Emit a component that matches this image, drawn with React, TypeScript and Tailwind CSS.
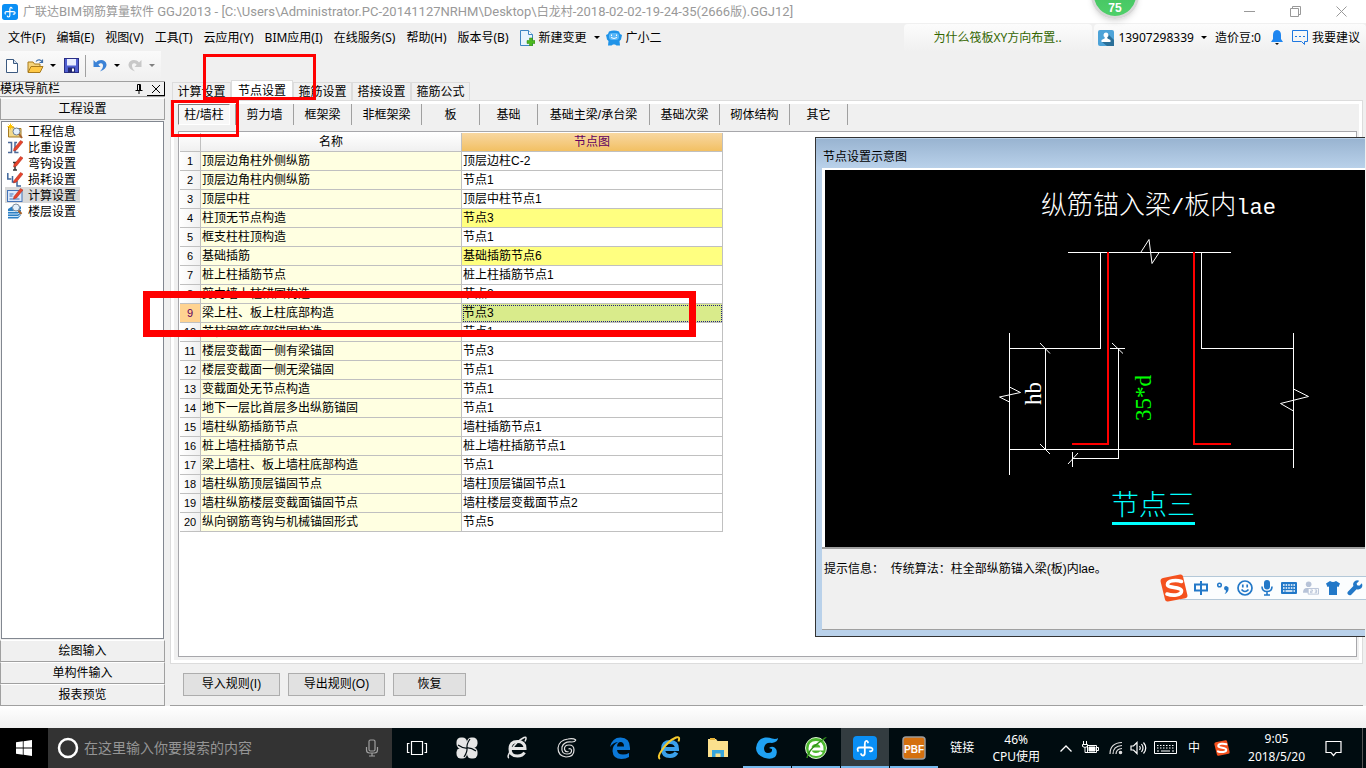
import React, { useState } from "react";
import clsx from "clsx";

type NodeRow = { name: string; node: string; changed?: boolean };

const MENUS = [
  "文件(F)",
  "编辑(E)",
  "视图(V)",
  "工具(T)",
  "云应用(Y)",
  "BIM应用(I)",
  "在线服务(S)",
  "帮助(H)",
  "版本号(B)",
];

const TABS = ["计算设置", "节点设置", "箍筋设置", "搭接设置", "箍筋公式"];

const MEMBERS = [
  { label: "柱/墙柱", width: "w-[58px]" },
  { label: "剪力墙", width: "w-[58px]" },
  { label: "框架梁", width: "w-[58px]" },
  { label: "非框架梁", width: "w-[70px]" },
  { label: "板", width: "w-[58px]" },
  { label: "基础", width: "w-[58px]" },
  { label: "基础主梁/承台梁", width: "w-[112px]" },
  { label: "基础次梁", width: "w-[70px]" },
  { label: "砌体结构", width: "w-[70px]" },
  { label: "其它", width: "w-[58px]" },
];

const ROWS: NodeRow[] = [
  { name: "顶层边角柱外侧纵筋", node: "顶层边柱C-2" },
  { name: "顶层边角柱内侧纵筋", node: "节点1" },
  { name: "顶层中柱", node: "顶层中柱节点1" },
  { name: "柱顶无节点构造", node: "节点3", changed: true },
  { name: "框支柱柱顶构造", node: "节点1" },
  { name: "基础插筋", node: "基础插筋节点6", changed: true },
  { name: "桩上柱插筋节点", node: "桩上柱插筋节点1" },
  { name: "剪力墙上柱锚固构造", node: "节点2" },
  { name: "梁上柱、板上柱底部构造", node: "节点3", changed: true },
  { name: "芯柱钢筋底部锚固构造", node: "节点1" },
  { name: "楼层变截面一侧有梁锚固", node: "节点3" },
  { name: "楼层变截面一侧无梁锚固", node: "节点1" },
  { name: "变截面处无节点构造", node: "节点1" },
  { name: "地下一层比首层多出纵筋锚固", node: "节点1" },
  { name: "墙柱纵筋插筋节点", node: "墙柱插筋节点1" },
  { name: "桩上墙柱插筋节点", node: "桩上墙柱插筋节点1" },
  { name: "梁上墙柱、板上墙柱底部构造", node: "节点1" },
  { name: "墙柱纵筋顶层锚固节点", node: "墙柱顶层锚固节点1" },
  { name: "墙柱纵筋楼层变截面锚固节点", node: "墙柱楼层变截面节点2" },
  { name: "纵向钢筋弯钩与机械锚固形式", node: "节点5" },
];

/* ---------- small icons ---------- */

function Caret({ className = "text-black" }: { className?: string }) {
  return (
    <svg width="6" height="3" viewBox="0 0 6 3" className={clsx("shrink-0", className)}>
      <path d="M0 0h6L3 3z" fill="currentColor" />
    </svg>
  );
}

function AppLogo({ size }: { size: number }) {
  return (
    <svg width={size} height={size} viewBox="0 0 24 24" className="shrink-0">
      <rect width="24" height="24" rx="4" fill="#0a8ff5" />
      <path
        d="M15 6.500Q14.500 4.500 13 5q-1.200.5-1.200 3v9q0 2.500-2 2.500-1.300 0-1.800-1.500M5 15q-1.500-3.500 2-3.500h9.500q3.500 0 3 2.500-.7 1.800-2.500 1.200"
        fill="none"
        stroke="#fff"
        strokeWidth="1.800"
        strokeLinecap="round"
      />
    </svg>
  );
}

function SogouLogo({ size }: { size: number }) {
  return (
    <svg width={size} height={size} viewBox="0 0 28 28" className="relative shrink-0">
      <path d="M3 4 20 .6q2.500-.4 3 2L27.400 21q.5 2.500-2 3.200L8 27.500q-2.500.4-3-2L.6 7.500Q.2 4.700 3 4z" fill="#f4511e" />
      <path
        d="M21.500 7.500C16 5.500 7.500 6.500 7.500 10.500c0 4 14 2 14 6.500 0 4.500-9 5-14.500 3"
        fill="none"
        stroke="#fff"
        strokeWidth="3.600"
        strokeLinecap="round"
      />
    </svg>
  );
}

function NewDocIcon() {
  return (
    <svg width="14" height="16" viewBox="0 0 14 16">
      <path d="M1.500 1.500h7l4 4v9h-11z" fill="#fff" stroke="#3c5a80" />
      <path d="M8.500 1.500v4h4" fill="#d5e3f3" stroke="#3c5a80" />
    </svg>
  );
}

function OpenIcon() {
  return (
    <svg width="17" height="16" viewBox="0 0 17 16">
      <path d="M1 14V4h5l1.500 2H13v3" fill="#f6d47a" stroke="#a87a1c" />
      <path d="M1 14.500 4 8.500h12l-3 6z" fill="#ffc845" stroke="#a87a1c" />
      <path d="M9 3.500c2-2.500 5-2 6 .5M15.500 1.500v3h-3" fill="none" stroke="#3f6fa8" strokeWidth="1.200" />
    </svg>
  );
}

function SaveIcon() {
  return (
    <svg width="15" height="15" viewBox="0 0 15 15">
      <rect x=".5" y=".5" width="14" height="14" fill="#4f5fd0" stroke="#2b2f86" />
      <rect x="3" y="1" width="9" height="6.500" fill="#e9edff" />
      <rect x="4" y="9.500" width="7" height="5" fill="#23286f" />
      <rect x="8" y="10.500" width="2" height="3" fill="#fff" />
    </svg>
  );
}

function UndoIcon({ className }: { className: string }) {
  return (
    <svg width="14" height="14" viewBox="0 0 14 14" className={className}>
      <path d="M.5 1v7h7L5.300 5.800C7.500 3.500 9.800 4 10 6.500c.1 2-1.200 4-3 6 4-1.500 6.700-4 6.500-7C13 .8 6.500-.5 3 3.500z" fill="currentColor" />
    </svg>
  );
}

function PencilMark() {
  return <path d="M7 9.500 13.500 1.500 16 3 9.500 11 6.500 12z" fill="#e8432c" stroke="#a82818" strokeWidth=".5" />;
}

const NAV_ITEMS = [
  {
    label: "工程信息",
    icon: (
      <>
        <path d="M1.500 4h5l1 1.500H14V14H1.500z" fill="#f2d98a" stroke="#a57a23" />
        <path d="M3.500.5v6M.5 3.500h6M1.500 1.500l4 4M5.500 1.500l-4 4" stroke="#ffc400" />
        <circle cx="9.500" cy="8.500" r="3.500" fill="#e5f1fb" stroke="#6c7f96" />
        <path d="m12 11 3 4" stroke="#a5622d" strokeWidth="2" />
      </>
    ),
  },
  {
    label: "比重设置",
    icon: (
      <>
        <path d="M1 3.500h3.500v10H1M11.500 13.500H8v-10h2" fill="none" stroke="#4c6a99" strokeWidth="1.500" />
        <PencilMark />
      </>
    ),
  },
  {
    label: "弯钩设置",
    icon: (
      <>
        <path d="M6 7.500h4M8 8v7M6 15h4" fill="none" stroke="#333" strokeWidth="1.500" />
        <PencilMark />
      </>
    ),
  },
  {
    label: "损耗设置",
    icon: (
      <>
        <path d="M.8 2v6h3.500M5.500 5v6h3M10 10v5h4" fill="none" stroke="#3f679c" strokeWidth="1.500" />
        <PencilMark />
      </>
    ),
  },
  {
    label: "计算设置",
    icon: (
      <>
        <rect x=".5" y="3.500" width="14.500" height="11" fill="#dce9fb" stroke="#4574b8" />
        <path d="M2.500 7h4M2.500 9h3M2.500 12h10" stroke="#4574b8" />
        <PencilMark />
      </>
    ),
  },
  {
    label: "楼层设置",
    icon: (
      <>
        <path d="m1 6 4-2.500h9V12l-3 3.500H1z" fill="#2c7fc4" />
        <path d="M1 8.500h10l3-2.500M1 11h10l3-2.500M1 13.500h10l3-2.500" fill="none" stroke="#cfe6f8" />
        <circle cx="9" cy="4.500" r="3.500" fill="#e5f1fb" stroke="#7d8b9b" />
        <path d="m11.500 7.500 3 3.500" stroke="#a5622d" strokeWidth="2" />
      </>
    ),
  },
];

/* ---------- top of the window ---------- */

function TitleBar() {
  return (
    <header className="flex h-[23px] shrink-0 items-center bg-white pl-[2px] text-[#999]">
      <AppLogo size={16} />
      <h1 className="ml-[5px] font-['Roboto','Noto_Sans_CJK_SC',sans-serif] text-[13px] leading-[22px] whitespace-nowrap">
        <span className="text-[12px]">广联达</span>BIM<span className="text-[12px]">钢筋算量软件</span>{" "}
        GGJ2013 - [C:\Users\Administrator.PC-20141127NRHM\Desktop\<span className="text-[12px]">白龙村</span>
        -2018-02-02-19-24-35(2666<span className="text-[12px]">版</span>).GGJ12]
      </h1>
      <div className="ml-auto flex">
        <button aria-label="最小化" className="flex h-[22px] w-[46px] items-center justify-center">
          <svg width="11" height="11" viewBox="0 0 11 11" stroke="#999">
            <path d="M0 5.500h11" />
          </svg>
        </button>
        <button aria-label="还原" className="flex h-[22px] w-[46px] items-center justify-center">
          <svg width="11" height="11" viewBox="0 0 11 11" fill="none" stroke="#999">
            <path d="M.5 2.500h8v8h-8zM2.500 2.500v-2h8v8h-2" />
          </svg>
        </button>
        <button aria-label="关闭" className="mr-[2px] flex h-[22px] w-[46px] items-center justify-center">
          <svg width="11" height="11" viewBox="0 0 11 11" stroke="#999">
            <path d="m.5.5 10 10M10.500.5l-10 10" />
          </svg>
        </button>
      </div>
    </header>
  );
}

function MenuBar() {
  return (
    <div className="flex h-[28px] shrink-0 items-center pt-px text-[12px] leading-[16px] whitespace-nowrap">
      <nav className="flex gap-[11px] pl-2">
        {MENUS.map((m) => (
          <button key={m}>{m}</button>
        ))}
      </nav>
      <button className="ml-[11px] flex items-center gap-1">
        <svg width="15" height="16" viewBox="0 0 15 16">
          <path d="M.5.5h8l4 4v11H.5z" fill="#e8f4fd" stroke="#3d86c4" />
          <path d="M8.500.5v4h4" fill="#fff" stroke="#3d86c4" />
          <path d="M9.500 8h3v2.500H15v3h-2.500V16h-3v-2.500H7v-3h2.500z" fill="#4cb81f" stroke="#2c8210" strokeWidth=".5" />
        </svg>
        新建变更
        <Caret className="ml-[3px] text-black" />
      </button>
      <button className="ml-[6px] flex items-center gap-1">
        <svg width="16" height="16" viewBox="0 0 16 16">
          <path d="M3 1.500Q8-.5 13 1.500l1 2.500 2 1-1 4.500-1.500 1.500.5 4.500h-3.500L9 14.500H7l-1.500 1H2l.5-4.500L1 9.500 0 5l2-1z" fill="#1f93e8" />
          <rect x="3" y="3" width="10" height="7" rx="3" fill="#5bb8f8" />
          <path d="M5.500 4.500v1.500M10.500 4.500v1.500M5 7.500q3 2 6 0" stroke="#fff" fill="none" />
        </svg>
        广小二
      </button>
      <div className="ml-auto flex h-full gap-[2px]">
        <a
          href="#tip"
          className="flex w-[188px] items-center rounded-t bg-linear-to-b from-[#fcfcfc] to-[#f0f0f0] pl-[29px] text-[#336600]"
        >
          为什么筏板XY方向布置..
        </a>
        <div className="flex items-center rounded-t bg-linear-to-b from-[#fcfcfc] to-[#f0f0f0] pr-[6px] pl-1">
          <svg width="16" height="16" viewBox="0 0 16 16">
            <rect width="16" height="16" rx="2" fill="#4da3d8" />
            <path d="m10 4 6 6v6H9l-5-4z" fill="#2b7099" />
            <path d="M8 2.500a2.500 2.500 0 0 1 1.200 4.700l.3 1.300 3 1.500V12h-9v-2l3-1.500.3-1.300A2.500 2.500 0 0 1 8 2.500z" fill="#fff" />
          </svg>
          <button className="ml-1 flex items-center gap-[7px]">
            13907298339
            <Caret />
          </button>
          <span className="ml-2">造价豆:0</span>
          <svg width="12" height="15" viewBox="0 0 12 15" className="ml-[10px]">
            <path d="M6 0q4 .5 4 5v4l2 3H0l2-3V5Q2 .5 6 0z" fill="#1f86f0" />
            <path d="M4 13h4l-2 2z" fill="#111" />
          </svg>
          <button className="ml-[9px] flex items-center gap-1">
            <svg width="16" height="15" viewBox="0 0 16 15" fill="none" stroke="#1f78e0">
              <path d="M.5.500h15v11h-3v3l-3-3h-9z" />
              <path d="M3 6.500h2M7 6.500h2M11 6.500h2" />
            </svg>
            我要建议
          </button>
        </div>
      </div>
    </div>
  );
}

function Toolbar() {
  return (
    <div className="flex h-[29px] w-[161px] shrink-0 items-center bg-linear-to-b from-[#fafafa] to-[#f0f0f0] pl-[5px]">
      <button aria-label="新建">
        <NewDocIcon />
      </button>
      <button aria-label="打开" className="ml-2 flex items-center gap-[6px]">
        <OpenIcon />
        <Caret />
      </button>
      <button aria-label="保存" className="ml-2">
        <SaveIcon />
      </button>
      <span className="ml-[6px] h-[22px] w-px bg-[#a0a0a0]" />
      <button aria-label="撤销" className="ml-[7px] flex items-center gap-[7px]">
        <UndoIcon className="text-[#3b82d6]" />
        <Caret />
      </button>
      <button aria-label="恢复" className="ml-[8px] flex items-center gap-[7px]">
        <UndoIcon className="-scale-x-100 text-[#c8c8c8]" />
        <Caret className="text-[#808080]" />
      </button>
    </div>
  );
}

/* ---------- left panel ---------- */

function NavPanel() {
  const [current, setCurrent] = useState("计算设置");
  const groupButton =
    "h-[22px] shrink-0 border border-t-white border-r-[#a0a0a0] border-b-[#a0a0a0] border-l-[#a0a0a0] text-center leading-[20px]";

  return (
    <aside className="flex w-[165px] shrink-0 flex-col pt-px">
      <div className="mb-px flex h-[16px] shrink-0 items-center border-y border-y-[#a0a0a0] leading-[14px]">
        <span>模块导航栏</span>
        <svg width="8" height="10" viewBox="0 0 8 10" className="ml-auto" fill="none" stroke="#000">
          <path d="M2.500 6V.5h3V6M4.500.5V6M.5 6.500h7M4 7v3" />
        </svg>
        <button
          aria-label="关闭面板"
          className="ml-1 flex h-[14px] w-[18px] items-center justify-center border-r border-b border-black"
        >
          <svg width="8" height="8" viewBox="0 0 8 8" stroke="#000">
            <path d="m0 0 8 8M8 0 0 8" />
          </svg>
        </button>
      </div>
      <button className={groupButton}>工程设置</button>
      <ul className="mx-px mt-px mb-px flex-1 border border-[#828790] bg-white pt-px pl-[3px]">
        {NAV_ITEMS.map((item) => (
          <li key={item.label}>
            <button
              onClick={() => setCurrent(item.label)}
              className={clsx(
                "flex h-4 w-[75px] items-center gap-[5px] pl-[2px] leading-[18px] whitespace-nowrap",
                item.label === current && "bg-[#d9d9d9]"
              )}
            >
              <svg width="16" height="16" viewBox="0 0 16 16" className="shrink-0">
                {item.icon}
              </svg>
              <span className="pt-px">{item.label}</span>
            </button>
          </li>
        ))}
      </ul>
      <button className={groupButton}>绘图输入</button>
      <button className={groupButton}>单构件输入</button>
      <button className={groupButton}>报表预览</button>
    </aside>
  );
}

/* ---------- settings ---------- */

function NodeTable() {
  const [selected, setSelected] = useState(8);

  return (
    <table className="w-[543px] table-fixed border-separate border-spacing-0">
      <colgroup>
        <col className="w-[21px]" />
        <col className="w-[261px]" />
        <col className="w-[261px]" />
      </colgroup>
      <thead>
        <tr className="h-[19px] leading-[18px]">
          <th className="border-r border-b border-[#c0c0c0] bg-linear-to-b from-white to-[#f0f0f0] p-0" />
          <th className="border-r border-b border-[#c0c0c0] bg-linear-to-b from-white to-[#f0f0f0] p-0 font-normal">
            名称
          </th>
          <th className="border-r border-b border-[#c0c0c0] bg-linear-to-b from-[#f8d7a0] to-[#f2c062] p-0 font-normal text-[#600060]">
            节点图
          </th>
        </tr>
      </thead>
      <tbody>
        {ROWS.map((row, i) => (
          <tr key={row.name} className="h-[19px] leading-[18px]" onClick={() => setSelected(i)}>
            <td
              className={clsx(
                "border-r border-b border-[#c0c0c0] p-0 text-center text-[11px]",
                i === selected ? "bg-[#ffd391] text-[#600060]" : "bg-linear-to-r from-white to-[#f0f0f0]"
              )}
            >
              {i + 1}
            </td>
            <td className="border-r border-b border-[#c0c0c0] bg-[#ffffe1] p-0 pl-px">{row.name}</td>
            <td
              className={clsx(
                "border-r border-b border-[#c0c0c0] p-0 pl-px",
                i === selected
                  ? "bg-[#d9eb8b] outline-1 -outline-offset-2 outline-[#202080] outline-dotted"
                  : row.changed && "bg-[#ffff80]"
              )}
            >
              {row.node}
            </td>
          </tr>
        ))}
      </tbody>
    </table>
  );
}

function Settings() {
  const [tab, setTab] = useState("节点设置");
  const [member, setMember] = useState("柱/墙柱");
  const ruleButton = "h-[23px] border border-[#adadad] bg-[#e1e1e1] leading-[21px]";

  return (
    <main className="ml-[5px] flex min-w-0 flex-1 flex-col pr-[3px]">
      <div className="flex h-5 shrink-0 items-end pl-[2px]">
        {TABS.map((t) => (
          <button
            key={t}
            onClick={() => setTab(t)}
            className={clsx(
              "border border-b-0 border-[#dcdcdc] whitespace-nowrap",
              t === tab ? "h-5 w-[62px] bg-white leading-[20px]" : "h-[18px] w-[59px] leading-[18px]"
            )}
          >
            {t}
          </button>
        ))}
      </div>

      <section className="flex flex-1 flex-col border border-[#dcdcdc] bg-white p-[3px]">
        <div className="flex flex-1 flex-col bg-[#f0f0f0] pr-[2px] pb-[3px] pl-1">
          <div className="flex h-[21px] shrink-0">
            {MEMBERS.map((m) => (
              <div key={m.label} className={clsx("flex shrink-0 border-r border-[#a0a0a0]", m.width)}>
                <button
                  onClick={() => setMember(m.label)}
                  className={clsx(
                    "flex-1 whitespace-nowrap leading-[20px]",
                    m.label === member &&
                      "mr-[5px] border border-t-[#808080] border-r-white border-b-white border-l-[#808080] bg-[#f8f8f8] leading-[18px]"
                  )}
                >
                  {m.label}
                </button>
              </div>
            ))}
          </div>
          <div className="mt-[6px] flex-1 border border-[#a7a7ab] bg-white p-px">
            <NodeTable />
          </div>
        </div>
      </section>

      <div className="flex h-[42px] shrink-0 items-center gap-2 border-b border-b-[#a0a0a0] pl-[13px]">
        <button className={clsx(ruleButton, "w-[97px]")}>导入规则(I)</button>
        <button className={clsx(ruleButton, "w-[97px]")}>导出规则(O)</button>
        <button className={clsx(ruleButton, "w-[73px]")}>恢复</button>
      </div>
    </main>
  );
}

/* ---------- node drawing window ---------- */

function NodeDrawing() {
  return (
    <svg viewBox="825 170 540 377" className="block w-full bg-black">
      <text x="1041" y="214" fill="#fff" fontSize="26" fontWeight="300" fontFamily="'Liberation Mono','Noto Sans CJK SC',monospace">
        纵筋锚入梁<tspan fontSize="22">/</tspan>板内<tspan fontSize="22">lae</tspan>
      </text>
      <g fill="none" stroke="#fff" shapeRendering="crispEdges">
        <path d="M1068 252.500H1231M1100.500 252V348.500H1009M1201.500 252V348.500H1293.500" />
        <path d="M1009.500 333V475M1293.500 333V468M1009 449.500H1294" />
        <path d="M1045.500 348V449M1118.500 348V458.500H1072M1110 348.500H1125M1072.500 452V467" />
      </g>
      <g fill="none" stroke="#fff">
        <path d="M1141 252 1149 239.500 1152 263.500 1159.500 252" />
        <path d="M1009.500 387 1020.500 392.500 999.500 397 1009.500 402" />
        <path d="M1293.500 389 1308.500 396.500 1280.500 403.500 1293.500 411" />
        <path d="m1040 343 10 10.500M1040 444l10 10M1112 343l11 10.500M1068 464l10-11" />
      </g>
      <g fill="none" stroke="#f00" strokeWidth="2" shapeRendering="crispEdges">
        <path d="M1108 252V444H1072M1194 252V444H1231" />
      </g>
      <text transform="translate(1041 405) rotate(-90)" fill="#fff" fontSize="23" fontFamily="'Liberation Serif',serif">
        hb
      </text>
      <text transform="translate(1151 421) rotate(-90)" fill="#0f0" fontSize="23" fontFamily="'Liberation Serif',serif">
        35*d
      </text>
      <text x="1111" y="515" fill="#0ff" fontSize="28" fontWeight="300" fontFamily="'Noto Sans CJK SC',sans-serif">
        节点三
      </text>
      <path d="M1112 523.500h83" stroke="#0ff" strokeWidth="3" />
    </svg>
  );
}

function NodeWindow() {
  return (
    <section className="absolute top-[137px] right-px flex h-[500px] w-[550px] flex-col border border-r-0 border-[#333] bg-[#b9d1ea] pt-px pl-[6px]">
      <h2 className="-ml-[6px] h-[29px] shrink-0 bg-linear-to-b from-[#99b4d1] to-[#b9d1ea] pl-[7px] font-['Noto_Sans','Noto_Sans_CJK_SC',sans-serif] leading-[35px]">
        节点设置示意图
      </h2>
      <div className="border-t-2 border-l-[3px] border-white">
        <NodeDrawing />
      </div>
      <div className="mb-[6px] flex-1 border-y border-t-2 border-[#a0a0a0] bg-[#f0f0f0] pt-3 pl-[2px] leading-4">
        提示信息：&nbsp;&nbsp;传统算法：柱全部纵筋锚入梁(板)内lae。
      </div>
    </section>
  );
}

function ImeBar() {
  return (
    <div className="absolute top-[574px] right-0 flex items-center">
      <SogouLogo size={28} />
      <div className="-ml-2 flex h-6 items-center gap-[6px] border-y border-[#b4c8d8] bg-[#fbfdfe] pr-[3px] pl-[13px] text-[#2278c8]">
        <svg width="16" height="16" viewBox="0 0 16 16" fill="none" stroke="currentColor" strokeWidth="2">
          <path d="M2 4.500h12v6H2zM8 1v14" />
        </svg>
        <svg width="16" height="16" viewBox="0 0 16 16">
          <circle cx="4.500" cy="5" r="1.800" fill="none" stroke="currentColor" strokeWidth="1.500" />
          <path d="M9 8a2.300 2.300 0 1 1 4.600 1q-.4 3.500-4 5 1.500-2 1.400-3.500Q9 10.300 9 8z" fill="currentColor" />
        </svg>
        <svg width="16" height="16" viewBox="0 0 16 16" fill="none" stroke="currentColor" strokeWidth="1.700">
          <circle cx="8" cy="8" r="7" />
          <path d="M5.800 4.500v3M10.200 4.500v3M4.500 9.500q3.500 4 7 0" />
        </svg>
        <svg width="16" height="16" viewBox="-2 0 16 16" fill="none" stroke="currentColor" strokeWidth="1.600">
          <rect x="3" y="0" width="6" height="9.500" rx="3" fill="currentColor" stroke="none" />
          <path d="M1 6.500q0 5 5 5t5-5M6 11.500V15M3 15h6" />
        </svg>
        <svg width="16" height="16" viewBox="0 0 16 16">
          <rect x="0" y="2" width="16" height="12" rx="1" fill="currentColor" />
          <path d="M2 5h12M2 8h12" stroke="#fff" strokeWidth="1.600" strokeDasharray="1.600 1" />
          <path d="M2 11h1.500M4.500 11h7M12.500 11H14" stroke="#fff" strokeWidth="1.600" />
        </svg>
        <svg width="16" height="16" viewBox="0 0 17 16" fill="#b7c3d8">
          <circle cx="6" cy="4" r="3" />
          <path d="M0 13q0-5 4-5h4v5z" />
          <path d="M5.500 8.500h11v6h-11zM8 10h2v1.500H8V13h2M12.500 10h2v3h-2M13 11.500h1.500" fill="#fbfdfe" stroke="#b7c3d8" />
        </svg>
        <svg width="16" height="16" viewBox="-1 -1 16 16">
          <path d="M4 0q3 2 6 0l4 2.500-1.500 3.500L11 5.500V14H3V5.500L1.500 6 0 2.500z" fill="currentColor" />
        </svg>
        <svg width="16" height="16" viewBox="0 0 15 15">
          <path d="m14 3-2.500 2.500L9.500 5 9 3.200 11.500.7Q8.500-.5 6.500 1.800 5.200 3.500 6 5.700L.8 11q-1 1.500.2 2.700 1.500 1.300 3 .1l5-5.200q2.500.8 4.300-.8Q15 6 14 3z" fill="currentColor" />
        </svg>
      </div>
    </div>
  );
}

/* ---------- taskbar ---------- */

const PINNED = [
  {
    label: "任务视图",
    icon: <path d="M6.500 5.500h11v13h-11zM4.500 7.500h-2v9h2M19.500 7.500h2v9h-2" fill="none" stroke="#fff" strokeWidth="1.200" />,
  },
  {
    label: "风扇",
    icon: (
      <g fill="#e6e6e6">
        <rect x="1.500" y="1.500" width="10.500" height="11" rx="4.500" />
        <rect x="12" y="1.500" width="10.500" height="10.500" rx="4.500" />
        <rect x="1.500" y="12" width="10.500" height="10.500" rx="4.500" />
        <rect x="12" y="11.500" width="10.500" height="11" rx="4.500" />
        <rect x="7" y="7" width="10" height="10" />
        <path d="M12 12Q8 12.500 3 9M12 12q-.5-4 3-9M12 12q4-.5 9 3M12 12q.5 4-3 9" fill="none" stroke="#000c10" strokeWidth="1.200" />
      </g>
    ),
  },
  {
    label: "浏览器",
    icon: (
      <g fill="none" stroke="#e6e6e6">
        <path d="M6 12.500h14q0-7-7.500-7T5 13q0 7 7.500 7 5 0 7-3.500" strokeWidth="3" />
        <path d="M4 22q-2.500-1 2-8Q12 5 19 1.500q3.500-1.300 1 4" strokeWidth="1.500" />
      </g>
    ),
  },
  {
    label: "螺旋",
    icon: (
      <path
        d="M21 4q-3-2-8-1Q4 4 3 12q0 8 8 9 8 0 8-7 0-5-5-5-5 0-4.500 4.500 1 3 4 2M21 4q-1 2-4 2-8-1-10 5-1 7 5 7 5 0 4.500-4-1-2-3-1"
        fill="none"
        stroke="#e0e0e0"
        strokeWidth="1.200"
      />
    ),
  },
];

const RUNNING = [
  {
    label: "Edge",
    icon: <path d="M2 11Q4 1.500 12.500 1.500 22 1.500 22 12v2H9q.5 4.500 6 4.500 3.500 0 6-1.500v4q-3 2-7.500 2Q5 23 4.500 15 4.500 9 10 6 5 6.500 2 11zM9 10.500h7Q16 6 12.500 6 9.500 6 9 10.500z" fill="#0b78d8" />,
  },
  {
    label: "Internet Explorer",
    icon: (
      <g fill="none">
        <path d="M6.500 13H20q0-7-7-7t-7 7q0 7 7 7 4.500 0 6.500-3.500" stroke="#3aa0ea" strokeWidth="4" />
        <path d="M3 23q-3-2 2-9Q11 5 19 1.500q4.500-1.500 2.500 4" stroke="#f5c92c" strokeWidth="2" />
      </g>
    ),
  },
  {
    label: "文件资源管理器",
    icon: (
      <>
        <path d="M2 3h8l1.500 2H22v16H2z" fill="#fbe08d" />
        <path d="M4 2h5v2H4z" fill="#e8b53a" />
        <path d="M6 14h12v7h-3.500v-3.500h-5V21H6z" fill="#38a5dc" />
      </>
    ),
  },
  {
    label: "广联达",
    open: true,
    icon: (
      <path
        d="M23 2q0 4-6 5-7-1-8 5 0 5 4 5 4.500 0 4-4l-3-1q4-3 7 1 2 4-1 8-4 3-10 1-9-3-9-10Q2 3 10 1.500 14 1 17 2.500 21 3.500 23 2z"
        fill="#1fa2f4"
      />
    ),
  },
  {
    label: "安全浏览器",
    open: true,
    icon: (
      <>
        <circle cx="12" cy="12" r="10.500" fill="#4cb82e" stroke="#d9f2cf" />
        <path d="M7.500 13H18q0-6.500-6-6.500T6 12.500q0 6 6 6 4 0 5.500-2.500" fill="none" stroke="#fff" strokeWidth="3" />
        <path d="M3 22q1-7 10-14T22 2" fill="none" stroke="#2e8f17" strokeWidth="1.500" />
      </>
    ),
  },
  { label: "钢筋算量", open: true, active: true, icon: null },
  {
    label: "PBF",
    open: true,
    icon: (
      <>
        <rect x="1" y="1" width="22" height="22" rx="3" fill="#d4700f" stroke="#9b9b9b" strokeWidth="1.500" />
        <text x="12" y="17" fill="#fff" fontSize="10" fontWeight="700" textAnchor="middle" fontFamily="'Liberation Sans',sans-serif">
          PBF
        </text>
      </>
    ),
  },
];

function Taskbar() {
  return (
    <footer className="flex h-10 shrink-0 bg-[#000c10] text-[12px] text-white">
      <button aria-label="开始" className="flex w-12 items-center justify-center bg-black">
        <svg width="16" height="16" viewBox="0 0 16 16" fill="#fff">
          <path d="M0 2.300 6.800 1.300V7.600H0zM7.600 1.200 16 0v7.600H7.600zM0 8.400h6.800v6.300L0 13.700zM7.600 8.400H16V16l-8.400-1.200z" />
        </svg>
      </button>
      <label className="flex w-[344px] items-center bg-[#333] pr-3 pl-[9px]">
        <svg width="22" height="22" viewBox="0 0 22 22" className="shrink-0">
          <circle cx="11" cy="11" r="9" fill="none" stroke="#fff" strokeWidth="2.500" />
        </svg>
        <input
          type="search"
          aria-label="搜索"
          placeholder="在这里输入你要搜索的内容"
          className="ml-[5px] min-w-0 flex-1 bg-transparent text-[14px] leading-5 outline-none placeholder:text-[#959595]"
        />
        <svg width="16" height="18" viewBox="0 0 16 18" fill="none" stroke="#a0a0a0" strokeWidth="1.200">
          <rect x="5" y="1" width="6" height="11" rx="1.500" />
          <path d="M2.500 8v3q0 3 3 3h5q3 0 3-3V8M8 14v3M5 17h6" />
        </svg>
      </label>
      {PINNED.map((app) => (
        <button key={app.label} aria-label={app.label} className="flex w-[50px] items-center justify-center">
          <svg width="24" height="24" viewBox="0 0 24 24">
            {app.icon}
          </svg>
        </button>
      ))}
      <div className="ml-1 flex gap-px">
        {RUNNING.map((app) => (
          <button
            key={app.label}
            aria-label={app.label}
            className={clsx(
              "flex w-12 items-center justify-center border-b-2 pt-[2px]",
              app.open ? "border-[#76b9ed]" : "border-transparent",
              app.active && "bg-[#333c40]"
            )}
          >
            {app.icon ? (
              <svg width="24" height="24" viewBox="0 0 24 24">
                {app.icon}
              </svg>
            ) : (
              <AppLogo size={24} />
            )}
          </button>
        ))}
      </div>

      <div className="ml-auto flex items-center">
        <button>链接</button>
        <div className="ml-[18px] text-center leading-[17px]">
          46%
          <br />
          CPU使用
        </div>
        <svg width="12" height="7" viewBox="0 0 12 7" className="ml-5" fill="none" stroke="#fff" strokeWidth="1.300">
          <path d="m.5 6.500 5.500-5.500 5.500 5.500" />
        </svg>
        <svg width="17" height="14" viewBox="0 0 17 14" className="ml-[10px]" fill="none" stroke="#fff">
          <path d="M5.500 4.500h9v7h-9zM14.500 6.500h2v3h-2" />
          <path d="M7 6h6v4H7z" fill="#fff" />
          <path d="M1.500 0v3M4.500 0v3M.5 3.500h5v2q-2.500 2-5 0zM3 6.500v5h3" />
        </svg>
        <svg width="14" height="14" viewBox="0 0 14 14" className="ml-[10px]" fill="none" stroke="#ddd" strokeWidth="1.200">
          <path d="M1 13Q1 2 13 1.500M4 13q0-8 9-8.500M7 13q0-5 6-5.500" />
          <circle cx="11.500" cy="11.500" r="1.200" fill="#ddd" />
        </svg>
        <svg width="17" height="14" viewBox="0 0 17 14" className="ml-[7px]" fill="none" stroke="#fff" strokeWidth="1.200">
          <path d="M1 5h2.500L7 1.500v11L3.500 9H1zM9.500 5q1.500 2 0 4M11.500 3q3 4 0 8M13.500 1.500q4.500 5.500 0 11" />
        </svg>
        <svg width="23" height="14" viewBox="0 0 23 14" className="ml-[7px]" fill="none" stroke="#fff">
          <path d="M.5.500h22v12H.5z" />
          <path d="M3 4.500h17M3 7h17" strokeDasharray="1.500 1.500" />
          <path d="M3 10h2M7 10h9M18 10h2" />
        </svg>
        <span className="ml-[11px]">中</span>
        <span className="ml-[14px]">
          <SogouLogo size={16} />
        </span>
        <div className="ml-[18px] text-center leading-[18px]">
          9:05
          <br />
          2018/5/20
        </div>
        <button aria-label="通知" className="ml-5">
          <svg width="17" height="17" viewBox="0 0 17 17" fill="none" stroke="#fff" strokeWidth="1.200">
            <path d="M1 1.500h15v11h-5L8.500 15.500 6 12.500H1z" />
          </svg>
        </button>
        <span className="mr-[3px] ml-5 h-10 w-px bg-[#555]" />
      </div>
    </footer>
  );
}

export default function App() {
  return (
    <div className="relative flex min-h-screen flex-col overflow-hidden bg-[#f0f0f0] font-['Noto_Sans','Noto_Sans_CJK_SC',sans-serif] text-[12px] text-black">
      <TitleBar />
      <MenuBar />
      <Toolbar />
      <div className="flex flex-1 font-['Liberation_Sans','Noto_Sans_CJK_SC',sans-serif]">
        <NavPanel />
        <Settings />
      </div>
      <div className="h-[22px] shrink-0 bg-linear-to-b from-white to-[#f0f0f0]" />
      <Taskbar />

      <div className="font-['Liberation_Sans','Noto_Sans_CJK_SC',sans-serif]">
        <NodeWindow />
        <ImeBar />
      </div>

      {/* Red marker frames */}
      <div className="pointer-events-none absolute top-[54px] left-[203px] h-[46px] w-[113px] border-3 border-[#f00]" />
      <div className="pointer-events-none absolute top-[100px] left-[171px] h-[37px] w-[68px] border-3 border-[#f00]" />
      <div className="pointer-events-none absolute top-[291px] left-[143px] h-[46px] w-[553px] border-7 border-[#f00]" />

      {/* Floating speed ball */}
      <div className="absolute -top-[29px] right-[227px] flex size-12 items-end justify-center rounded-full border-3 border-[#d8d8d8] bg-linear-to-b from-[#3dbb5c] to-[#4fd06a] pb-px font-['Liberation_Sans',sans-serif] text-[12px] leading-[14px] font-bold text-white shadow-md">
        75
      </div>
    </div>
  );
}
